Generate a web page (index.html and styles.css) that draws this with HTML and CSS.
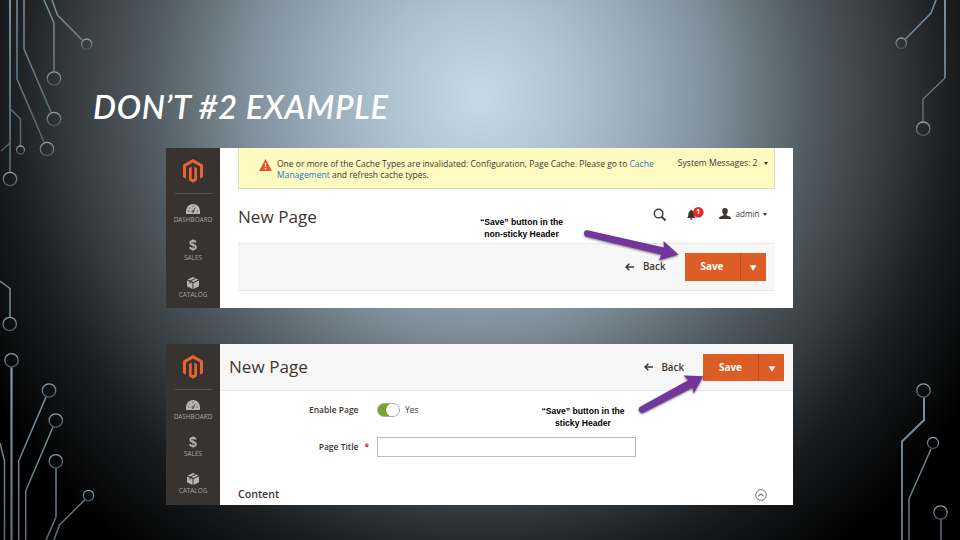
FILE: index.html
```
<!DOCTYPE html>
<html lang="en">
<head>
<meta charset="utf-8">
<title>Don’t #2 Example</title>
<link rel="stylesheet" href="styles.css">
</head>
<body>
<svg class="defs" width="0" height="0">
  <symbol id="logo" viewBox="0 0 22 26"><path d="M11 1 21 6.800V19l-3 1.700V8.500L11 4.400 4 8.500v12.200L1 19V6.800Z"/><path d="M7 10.200 9.700 8.600V20.500L11 21.300l1.300-.8V8.600L15 10.200V22.200L11 24.700 7 22.200Z"/></symbol>
  <symbol id="gauge" viewBox="0 0 14 10"><path d="M0 10V7a7 7 0 0 1 14 0v3Z"/><g stroke="#373330" fill="none" stroke-width=".8"><path d="m7 7.600 2.400-4M2 7h1.300M3.200 3.700l.9.800M7 1.600v1.300M12 7h-1.300"/><circle cx="6.800" cy="7.500" r="1"/></g></symbol>
  <symbol id="box" viewBox="0 0 12 12"><path d="m6 0 2.200 1-5 2.400L.7 2.500ZM9.200 1.400l2.300 1.100L6.400 5 4.200 4ZM0 3.500l2.500 1v2l1 .4V5l2 .9v6L0 9.300ZM12 3.500v5.800l-5.500 2.600v-6Z"/></symbol>
</svg>
<main class="slide">
  <svg class="circuit" viewBox="0 0 960 540" fill="none">
    <defs>
      <linearGradient id="gt" gradientUnits="userSpaceOnUse" x1="0" y1="0" x2="0" y2="185"><stop stop-color="#7891a1"/><stop offset="1" stop-color="#445660"/></linearGradient>
      <linearGradient id="gb" gradientUnits="userSpaceOnUse" x1="0" y1="370" x2="0" y2="540"><stop stop-color="#8299a7"/><stop offset="1" stop-color="#5b6e7b"/></linearGradient>
      <linearGradient id="gc" x1="0" y1="0" x2="0" y2="1"><stop stop-color="#8aa0ae"/><stop offset="1" stop-color="#465761"/></linearGradient>
    </defs>
    <g stroke="url(#gt)" stroke-width="1.500">
      <path stroke-width="2" d="M10 0V172"/><path d="M17 0V79L44 142M24 0V49L51 112M44 0 54 23V71M52 0 57.500 15 82 40M11 109.500 20.500 119V146M10 143 1 151M936 0 931 13 905.500 39"/>
      <path stroke-width="2" d="M945 0V78"/><path d="M945 78 923 99V122"/>
    </g>
    <path stroke="#768d9b" stroke-width="1.500" d="M0 281 10 288.500V317"/>
    <g stroke="url(#gb)" stroke-width="1.500">
      <path stroke-width="2.200" d="M11.500 367V540"/><path d="M0 443 4.500 461V540M18.700 540V461L46 397M25.700 540V491L53 427M56 468V517L46 540M54 540 59.500 525 85 499.500M909 540V499L931 449M941 519V540"/>
      <path stroke-width="2" d="M924 397V420L902 441.500V540"/>
    </g>
    <g stroke="url(#gc)" stroke-width="1.300">
      <circle cx="54" cy="78.500" r="6.700"/><circle cx="54" cy="119" r="6.700"/><circle cx="47" cy="149" r="6.700"/><circle cx="20.500" cy="150" r="4"/><circle cx="10" cy="179" r="6.700"/><circle cx="86.700" cy="44.200" r="5.200"/><circle cx="901.300" cy="43.200" r="5.200"/><circle cx="923.200" cy="128.700" r="6.700"/>
      <circle cx="9.700" cy="324" r="6.700"/><circle cx="11.500" cy="360.300" r="6.700"/><circle cx="49" cy="390.500" r="6.700"/><circle cx="55.800" cy="461.300" r="6.700"/><circle cx="55.800" cy="420.500" r="6.700"/><circle cx="88.500" cy="495.500" r="5.200"/><circle cx="923.500" cy="390.500" r="6.700"/><circle cx="933" cy="443" r="5.500"/><circle cx="940.500" cy="512.500" r="6.700"/>
    </g>
  </svg>
  <h1 class="title">DON’T #2 EXAMPLE</h1>

  <section class="shot shot-top">
    <nav class="side">
      <svg class="logo"><use href="#logo"/></svg>
      <hr class="rule">
      <div class="item"><svg class="gauge"><use href="#gauge"/></svg><span class="lab">DASHBOARD</span></div>
      <div class="item"><b class="dollar">$</b><span class="lab">SALES</span></div>
      <div class="item"><svg class="box"><use href="#box"/></svg><span class="lab">CATALOG</span></div>
    </nav>
    <div class="main inset">
      <div class="alert">
        <svg class="warn" viewBox="0 0 13 12"><path d="M6.500 0 13 12H0Z" fill="#e0592a"/><path d="M6.500 4v4M6.500 9v1.300" stroke="#fff" stroke-width="1.200"/></svg>
        <p class="msg">One or more of the Cache Types are invalidated: Configuration, Page Cache. Please go to <a>Cache</a><br><a>Management</a> and refresh cache types.</p>
        <span class="sys">System Messages: 2</span><i class="tri"></i>
      </div>
      <div class="head">
        <h2>New Page</h2>
        <div class="note">“Save” button in the<br>non-sticky Header</div>
        <div class="tools">
          <svg class="search" viewBox="0 0 14 14" fill="none" stroke="#41362f"><circle cx="5.600" cy="5.600" r="4.300" stroke-width="1.400"/><path d="m8.700 8.700 3.800 3.800" stroke-width="1.900"/></svg>
          <svg class="bell" viewBox="0 0 20 14"><path d="M.8 11c1.500-1 1.400-2.400 1.600-4.200C2.700 4.800 3.700 4 4.400 3.700c0-1.300 1.800-1.300 1.800 0C7 4 7.900 4.800 8.200 6.800c.2 1.800.1 3.200 1.500 4.200ZM4 11.600h2.600a1.300 1.300 0 0 1-2.600 0Z" fill="#41362f"/><circle cx="12.300" cy="5.300" r="5.300" fill="#e02b27"/></svg><span class="count">1</span>
          <svg class="user" viewBox="0 0 12 11"><path d="M6 0C8 0 9 1.300 8.800 3.200 8.700 4.900 8 5.600 7.500 6.200v1c.6.900 4.300 1 4.300 2.500V11H.2V9.700c0-1.500 3.700-1.600 4.300-2.500v-1C4 5.600 3.300 4.900 3.200 3.200 3 1.300 4 0 6 0Z" fill="#41362f"/></svg>
          <span class="admin">admin</span><i class="tri"></i>
        </div>
      </div>
      <div class="bar">
        <svg class="back-arrow" viewBox="0 0 9 8" fill="none" stroke="#41362f" stroke-width="1.400"><path d="M9 4H1M4.300.7 1 4l3.300 3.300"/></svg><span class="back">Back</span>
        <div class="save"><span>Save</span><i><svg width="8" height="6" viewBox="0 0 8 6"><path d="M.6.300h6.800L4 5.800Z" fill="#fff"/></svg></i></div>
      </div>
    </div>
    <svg class="arrow arrow-a" viewBox="0 0 110 50"><path d="M8.300 10.300C4.800 9.500 3.800 14.800 6.800 16.500L82.500 34.800 80 40.300 99.500 34.400 84.500 21 85 27.500Z" fill="#70369c"/></svg>
  </section>

  <section class="shot shot-bottom">
    <nav class="side">
      <svg class="logo"><use href="#logo"/></svg>
      <hr class="rule">
      <div class="item"><svg class="gauge"><use href="#gauge"/></svg><span class="lab">DASHBOARD</span></div>
      <div class="item"><b class="dollar">$</b><span class="lab">SALES</span></div>
      <div class="item"><svg class="box"><use href="#box"/></svg><span class="lab">CATALOG</span></div>
    </nav>
    <div class="main">
      <div class="bar sticky">
        <h2>New Page</h2>
        <svg class="back-arrow" viewBox="0 0 9 8" fill="none" stroke="#41362f" stroke-width="1.400"><path d="M9 4H1M4.300.7 1 4l3.300 3.300"/></svg><span class="back">Back</span>
        <div class="save"><span>Save</span><i><svg width="8" height="6" viewBox="0 0 8 6"><path d="M.6.300h6.800L4 5.800Z" fill="#fff"/></svg></i></div>
      </div>
      <div class="field enable">
        <label>Enable Page</label><span class="req"></span>
        <span class="toggle"></span><span class="yes">Yes</span>
        <div class="note">“Save” button in the<br>sticky Header</div>
      </div>
      <div class="field name">
        <label>Page Title</label><span class="req">*</span><span class="input"></span>
      </div>
      <div class="content">
        <h3>Content</h3>
        <svg class="chev" viewBox="0 0 12 12" fill="none" stroke="#777"><circle cx="6" cy="6" r="5.300" stroke-width="1"/><path d="M3.300 7.200 6 5l2.700 2.200" stroke-width="1.100"/></svg>
      </div>
    </div>
    <svg class="arrow arrow-b" viewBox="0 0 80 50"><path d="M6.200 31.800C3.200 34 5.200 38.800 9.200 37.800L58.400 12.800 59.600 18.400 69.300 1.200 49.600.6 54.200 5.300Z" fill="#70369c"/></svg>
  </section>
</main>
</body>
</html>
```
FILE: styles.css
```
* { box-sizing: border-box; }
body { margin: 0; font-family: "Open Sans", sans-serif; color: #41362f; }
h1, h2, h3, p { margin: 0; font-weight: 400; }
svg { display: block; flex: none; }
.defs { position: absolute; }
.slide {
  position: relative; width: 960px; height: 540px; overflow: hidden;
  padding: 87px 167px 0 166px;
  background: radial-gradient(circle at 480px 97px, #c4dae9 0, #b0c5d3 85px, #98aab8 165px, #808f9b 233px, #667379 285px, #525b62 330px, #383f42 400px, #1a1c1e 475px, #000 575px);
}
.circuit { position: absolute; inset: 0; width: 960px; height: 540px; }
.title {
  position: relative; margin-left: -73px; height: 61px; line-height: 39px; white-space: nowrap;
  font-family: Lato, sans-serif; font-style: italic; font-weight: 600; font-size: 32.500px; letter-spacing: .650px; color: #fff;
}
.shot { position: relative; display: flex; width: 627px; height: 160.400px; background: #fff; }
.shot-bottom { margin-top: 36px; }
.side { width: 54px; background: #373330; display: flex; flex-direction: column; align-items: center; padding-top: 10px; flex: none; }
.logo { width: 22px; height: 26px; fill: #e8632f; }
.rule { width: 37px; height: 1px; margin: 9px 0 10px; border: 0; background: #57534f; flex: none; }
.item { height: 37.300px; display: flex; flex-direction: column; align-items: center; color: #aaa6a0; fill: #b9b5b1; flex: none; }
.gauge { width: 14px; height: 10px; }
.box { width: 12px; height: 12px; margin-top: -2px; }
.dollar { font-family: "Liberation Sans", sans-serif; font-size: 14px; line-height: 12px; height: 12px; margin-top: -2px; font-weight: 700; color: #b9b5b1; }
.lab { font-size: 6.400px; line-height: 9px; margin-top: 1.300px; }
.main { flex: 1; min-width: 0; }
.inset { padding: 0 18.500px 0 18px; }
.alert { height: 40.500px; background: #fefac0; border: 1px solid #dddcc0; border-top: 0; display: flex; padding: 9.700px 6px 0 20px; font-size: 8.520px; line-height: 11.500px; white-space: nowrap; }
.warn { width: 13px; height: 12px; margin: 1px 5px 0 0; }
.alert a { color: #1979c3; }
.sys { margin-left: auto; font-size: 8.600px; }
.tri { width: 0; height: 0; border: 0 solid transparent; border-width: 3.500px 2.900px 0; border-top-color: #41362f; margin: 4px 0 0 6px; }
.head { height: 54.500px; display: flex; }
h2 { font-size: 17.100px; line-height: 24px; }
.head h2 { margin-top: 16.500px; width: 241px; }
.note { font: bold 8.600px/12px "Liberation Sans", sans-serif; color: #000; text-align: center; width: 85px; white-space: nowrap; }
.head .note { margin-top: 27.500px; }
.tools { position: relative; margin: 17.500px 7.500px 0 auto; display: flex; font-size: 8.100px; line-height: 16px; }
.search { width: 14px; height: 14px; margin: 2px 19.500px 0 0; }
.bell { width: 20px; height: 14px; margin: .5px 12.500px 0 0; }
.count { position: absolute; left: 40.800px; top: -2px; width: 10px; text-align: center; color: #fff; font-size: 7px; font-weight: 700; }
.user { width: 12px; height: 11px; margin: 2px 5px 0 0; }
.tools .tri { margin: 7px 0 0 3.500px; }
.bar { height: 47.500px; background: #f7f7f7; border: solid #e8e8e8; border-width: 1px 0; display: flex; justify-content: flex-end; align-items: center; padding-right: 9px; }
.back-arrow { width: 9px; height: 8px; }
.back { font-weight: 600; font-size: 9.800px; margin: 0 19px 0 8.500px; }
.save { width: 81px; height: 27.500px; display: flex; background: #dc5d26; color: #fff; font-size: 9.900px; font-weight: 700; }
.save span { width: 56px; text-align: center; line-height: 27px; border-right: 1px solid #b84d22; }
.save i { flex: 1; display: flex; align-items: center; justify-content: center; padding-top: 2px; }
.sticky { height: 46.500px; border-top: 0; }
.sticky h2 { margin: 0 auto 0 9px; }
.sticky .save { margin-top: 1px; }
.field { display: flex; align-items: center; font-size: 8.500px; }
.field label { width: 138.500px; text-align: right; font-weight: 600; flex: none; }
.req { width: 18.500px; padding-left: 6px; color: #e22626; font-weight: 700; flex: none; }
.enable { height: 37.500px; }
.toggle { width: 23px; height: 14px; border-radius: 7px; border: 1px solid #aaa; background: radial-gradient(circle at 15px 6px, #fff 6.500px, #79a22e 7px); }
.yes { margin-left: 5px; width: 135.500px; font-size: 8.500px; }
.enable .note { margin-top: 14px; width: 85px; }
.name { height: 37px; }
.input { width: 259px; height: 20px; border: 1px solid #bbb; background: #fff; }
.content { height: 39px; padding: 19.500px 26px 0 18px; display: flex; justify-content: space-between; }
h3 { font-size: 10.600px; font-weight: 600; line-height: 18px; }
.chev { width: 12px; height: 12px; margin-top: 4px; }
.arrow { position: absolute; filter: drop-shadow(0 1px 1px rgba(0,0,0,.55)); }
.arrow-a { left: 412.500px; top: 72px; width: 110px; height: 50px; }
.arrow-b { left: 468px; top: 31px; width: 80px; height: 50px; }
```
